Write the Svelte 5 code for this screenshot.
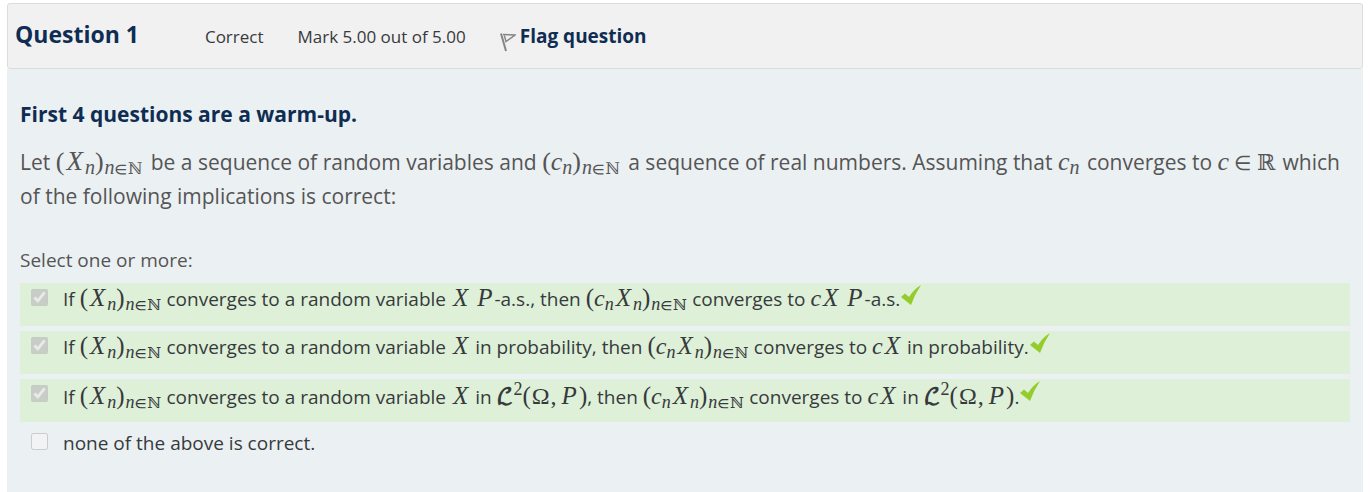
<script>
  const answers = [
    { id: 'a', checked: true, mode: 'P-a.s.' },
    { id: 'b', checked: true, mode: 'probability' },
    { id: 'c', checked: true, mode: 'L2' },
    { id: 'd', checked: false, mode: 'none' }
  ];
</script>

{#snippet family(c, x)}
  <span class="math"><span class="paren">(</span>{#if c}<i>c</i><sub>n</sub>{/if}{#if x}<i class="cap">X</i><sub>n</sub>{/if}<span class="paren">)</span><sub class="index">n<span class="rel">∈</span><span class="bb">ℕ</span></sub></span>
{/snippet}

{#snippet space()}
  <span class="math"><span class="script">ℒ</span><sup>2</sup><span class="paren">(</span><span class="omega">Ω</span><span class="comma">,</span><i class="cap">P</i><span class="paren">)</span></span>
{/snippet}

<main>
  <header>
    <h3>Question 1</h3>
    <span class="state">Correct</span>
    <span class="grade">Mark 5.00 out of 5.00</span>
    <a href="#flag">
      <svg width="16" height="20" viewBox="0 0 16 20" fill="none" stroke="#858585">
        <path d="M1 1.5 6 19" stroke-width="2" />
        <path d="M3 2.5 15 3 6 9.500 4.300 3.500" stroke-width="1.400" />
      </svg>Flag question</a>
  </header>

  <form class="content">
    <h4>First 4 questions are a warm-up.</h4>
    <p class="prompt">
      Let {@render family(false, true)} <span class="after">be a sequence of random variables and</span>
      {@render family(true, false)} <span class="after">a sequence of real numbers. Assuming that</span>
      <span class="math"><i>c</i><sub>n</sub></span> <span class="after">converges to</span>
      <span class="math"><i>c</i><span class="in">∈</span><span class="bb">ℝ</span></span> which of the following implications is correct:
    </p>

    <fieldset>
      <legend>Select one or more:</legend>
      {#each answers as { id, checked, mode }}
        <div class="answer" class:correct={checked}>
          <input type="checkbox" id={id} {checked} disabled>
          <label for={id}>
            {#if mode === 'none'}
              none of the above is correct.
            {:else}
              If {@render family(false, true)} converges to a random variable <span class="math"><i class="cap">X</i></span>
              {#if mode === 'P-a.s.'}
                <span class="math"><i class="cap">P</i></span>-a.s., then
              {:else if mode === 'probability'}
                in probability, then
              {:else}
                in {@render space()}, then
              {/if}
              {@render family(true, true)} converges to <span class="math"><i>c</i><i class="cap">X</i></span>
              {#if mode === 'P-a.s.'}
                <span class="math"><i class="cap">P</i></span>-a.s.
              {:else if mode === 'probability'}
                in probability.
              {:else}
                in {@render space()}.
              {/if}
            {/if}
          </label>
          {#if checked}
            <svg class="tick" width="22" height="22" viewBox="0 0 22 22" role="img" aria-label="Correct">
              <path d="M1 13 5 9.500 9 13 Q14 5 21 1 Q15 10 11 21 Z" fill="#94cc2c" />
            </svg>
          {/if}
        </div>
      {/each}
    </fieldset>
  </form>
</main>

<style>
:global(body) {
  background-color: #ffffff;
}

main {
  padding: 3px 7px 0;
  font-family: "Open Sans", "Noto Sans", sans-serif;
  font-size: 19px;
  color: #373a3c;
}

header {
  display: flex;
  align-items: center;
  box-sizing: border-box;
  min-height: 66px;
  padding: 0 7px;
  border: 1px solid #dcdcdc;
  border-radius: 3px;
  background-color: #f1f1f1;
  font-size: 17px;
}

h3, h4 {
  margin: 0;
  color: #0f2d52;
  font-weight: bold;
}

h3 {
  font-size: 23px;
  padding-bottom: 4px;
}

.state {
  margin-left: 66px;
}

.grade {
  margin-left: 34px;
}

a {
  display: flex;
  align-items: center;
  gap: 4px;
  margin-left: 34px;
  font-size: 19px;
  font-weight: bold;
  color: #0f2d52;
  text-decoration: none;
}

a svg {
  margin-top: 12px;
}

.content {
  padding: 28px 13px 27px;
  background-color: #ebf0f3;
}

h4 {
  font-size: 21px;
  line-height: 34px;
}

.prompt {
  margin: 14px 0 33px;
  font-size: 21px;
  line-height: 34px;
  color: #555555;
}

.after {
  padding-left: 2px;
}

fieldset {
  min-width: 0;
  margin: 0;
  padding: 0;
  border: 0;
}

legend {
  padding: 0;
  margin-bottom: 9px;
  line-height: 28px;
  color: #555555;
}

.answer {
  display: flex;
  align-items: flex-start;
  box-sizing: border-box;
  min-height: 43px;
  margin-bottom: 5px;
  padding: 1px 10px 10px;
}

.correct {
  background-color: #def0d8;
}

input {
  width: 17px;
  height: 17px;
  margin: 5px 15px 0 1px;
}

label {
  line-height: 30px;
}

.math {
  font-family: "Liberation Serif", serif;
  font-size: 24px;
  line-height: 1;
  white-space: nowrap;
}

.math .cap {
  padding: 0 2px;
  font-size: 25px;
}

.paren {
  font-size: 25px;
}

.prompt .math,
.prompt .paren {
  font-size: 26px;
}

.prompt .cap {
  font-size: 27px;
}

sub, sup {
  font-size: 18px;
  line-height: 1;
}

sub {
  font-style: italic;
  vertical-align: -4px;
}

.prompt sub {
  font-size: 20px;
}

sup {
  vertical-align: 9px;
}

.index {
  padding-left: 1px;
}

.rel, .bb {
  font-family: "DejaVu Math TeX Gyre", "DejaVu Sans", sans-serif;
  font-style: normal;
  line-height: 1;
}

.bb {
  font-size: 22px;
}

.rel,
.index .bb {
  font-size: 15px;
}

.prompt .rel,
.prompt .index .bb {
  font-size: 16px;
}

.in {
  padding: 0 5px;
  font-size: 20px;
}

.script {
  font-family: "DejaVu Math TeX Gyre", "DejaVu Sans", sans-serif;
  font-size: 22px;
  font-weight: bold;
  line-height: 1;
}

.omega {
  padding: 0 1px;
}

.comma {
  padding-right: 3px;
}

.tick {
  flex: none;
}
</style>
